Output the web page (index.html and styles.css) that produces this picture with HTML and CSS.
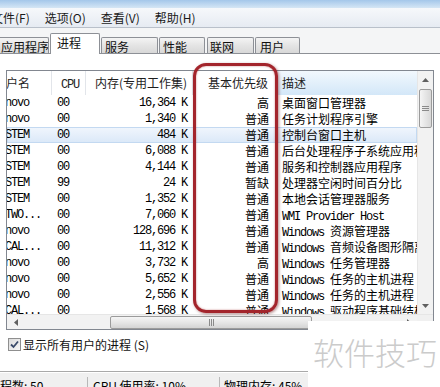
FILE: index.html
```html
<!DOCTYPE html>
<html>
<head>
<meta charset="utf-8">
<link rel="stylesheet" href="styles.css">
</head>
<body>
<div class="win">
  <div class="titlebar"></div>
  <div class="menubar">
    <span class="mi">文件(F)</span><span class="mi">选项(O)</span><span class="mi">查看(V)</span><span class="mi">帮助(H)</span>
  </div>
  <div class="tabstrip">
    <div class="tab t1">应用程序</div>
    <div class="tab t2 sel">进程</div>
    <div class="tab t3">服务</div>
    <div class="tab t4">性能</div>
    <div class="tab t5">联网</div>
    <div class="tab t6">用户</div>
  </div>
  <div class="panel">
    <div class="listbox">
      <div class="lv">
        <div class="lv-main">
          <div class="hdr">
            <div class="c1 h">用户名</div>
            <div class="c2 h"><span class="m">CPU</span></div>
            <div class="c3 h">内存(专用工作集)</div>
            <div class="c4 h">基本优先级</div>
            <div class="c5 h hover">描述</div>
          </div>
          <div class="rows">
            <div class="row"><div class="c1 m">Lenovo</div><div class="c2 m">00</div><div class="c3 m">16,364 K</div><div class="c4">高</div><div class="c5">桌面窗口管理器</div></div>
            <div class="row"><div class="c1 m">Lenovo</div><div class="c2 m">00</div><div class="c3 m">1,340 K</div><div class="c4">普通</div><div class="c5">任务计划程序引擎</div></div>
            <div class="row on"><div class="c1 m">SYSTEM</div><div class="c2 m">00</div><div class="c3 m">484 K</div><div class="c4">普通</div><div class="c5">控制台窗口主机</div></div>
            <div class="row"><div class="c1 m">SYSTEM</div><div class="c2 m">00</div><div class="c3 m">6,088 K</div><div class="c4">普通</div><div class="c5">后台处理程序子系统应用程序</div></div>
            <div class="row"><div class="c1 m">SYSTEM</div><div class="c2 m">00</div><div class="c3 m">4,144 K</div><div class="c4">普通</div><div class="c5">服务和控制器应用程序</div></div>
            <div class="row"><div class="c1 m">SYSTEM</div><div class="c2 m">99</div><div class="c3 m">24 K</div><div class="c4">暂缺</div><div class="c5">处理器空闲时间百分比</div></div>
            <div class="row"><div class="c1 m">SYSTEM</div><div class="c2 m">00</div><div class="c3 m">1,352 K</div><div class="c4">普通</div><div class="c5">本地会话管理器服务</div></div>
            <div class="row"><div class="c1 m">NETWO...</div><div class="c2 m">00</div><div class="c3 m">7,060 K</div><div class="c4">普通</div><div class="c5"><span class="m">WMI Provider Host</span></div></div>
            <div class="row"><div class="c1 m">Lenovo</div><div class="c2 m">00</div><div class="c3 m">128,696 K</div><div class="c4">普通</div><div class="c5"><span class="m">Windows </span>资源管理器</div></div>
            <div class="row"><div class="c1 m">LOCAL...</div><div class="c2 m">00</div><div class="c3 m">11,312 K</div><div class="c4">普通</div><div class="c5"><span class="m">Windows </span>音频设备图形隔离</div></div>
            <div class="row"><div class="c1 m">Lenovo</div><div class="c2 m">00</div><div class="c3 m">3,732 K</div><div class="c4">高</div><div class="c5"><span class="m">Windows </span>任务管理器</div></div>
            <div class="row"><div class="c1 m">Lenovo</div><div class="c2 m">00</div><div class="c3 m">5,652 K</div><div class="c4">普通</div><div class="c5"><span class="m">Windows </span>任务的主机进程</div></div>
            <div class="row"><div class="c1 m">Lenovo</div><div class="c2 m">00</div><div class="c3 m">2,556 K</div><div class="c4">普通</div><div class="c5"><span class="m">Windows </span>任务的主机进程</div></div>
            <div class="row"><div class="c1 m">LOCAL...</div><div class="c2 m">00</div><div class="c3 m">1,568 K</div><div class="c4">普通</div><div class="c5"><span class="m">Windows </span>驱动程序基础结构</div></div>
          </div>
        </div>
        <div class="vscroll">
          <div class="arrow"><svg width="7" height="4" viewBox="0 0 7 4"><path d="M0 4L3.5 0L7 4Z" fill="#606060"/></svg></div>
          <div class="vthumb"><svg width="7" height="5" viewBox="0 0 7 5"><path d="M0 0.5H7M0 2.5H7M0 4.5H7" stroke="#8a8a8a" stroke-width="1"/></svg></div>
          <div class="fill"></div>
          <div class="arrow"><svg width="7" height="4" viewBox="0 0 7 4"><path d="M0 0L3.5 4L7 0Z" fill="#606060"/></svg></div>
        </div>
      </div>
      <div class="hscroll">
        <div class="harrow"><svg width="4" height="7" viewBox="0 0 4 7"><path d="M4 0L0 3.5L4 7Z" fill="#606060"/></svg></div>
        <div class="hthumb"><svg width="5" height="7" viewBox="0 0 5 7"><path d="M0.5 0V7M2.5 0V7M4.5 0V7" stroke="#8a8a8a" stroke-width="1"/></svg></div>
        <div class="fill"></div>
        <div class="harrow"><svg width="4" height="7" viewBox="0 0 4 7"><path d="M0 0L4 3.5L0 7Z" fill="#606060"/></svg></div>
        <div class="corner"></div>
      </div>
    </div>
    <div class="chk">
      <span class="box"><svg width="9" height="9" viewBox="0 0 9 9"><path d="M1 4.5L3.5 7L8 1.5" fill="none" stroke="#3a4a6a" stroke-width="1.8"/></svg></span>
      <span class="lbl">显示所有用户的进程 (S)</span>
    </div>
  </div>
  <div class="status">
    <div class="s s1">进程数: 50</div>
    <div class="s s2">CPU 使用率: 10%</div>
    <div class="s s3">物理内存: 45%</div>
  </div>
  <div class="redbox"></div>
  <div class="wm">软件技巧</div>
</div>
</body>
</html>
```

FILE: styles.css
```css
* { box-sizing: border-box; margin: 0; padding: 0; }
html, body { width: 440px; height: 387px; overflow: hidden; background: #fff; }
body { font-family: "Noto Sans CJK SC", "Noto Sans", sans-serif; font-size: 12px; color: #000; }

.win { position: relative; width: 440px; height: 387px; overflow: hidden; display: flex; flex-direction: column; }

.titlebar { flex: none; height: 8px; background: linear-gradient(#a4c7ea, #d5e6f5); }

.menubar { flex: none; height: 20px; display: flex; align-items: center; gap: 15px; background: linear-gradient(#f6f8fb, #e6ebf2); border-bottom: 1px solid #b9c0ca; line-height: 18px; color: #1a1a1a; }
.mi { white-space: nowrap; }
.mi:first-child { margin-left: -9px; }

.tabstrip { flex: none; height: 26px; display: flex; align-items: flex-end; background: #f4f5f6; border-bottom: 1px solid #8d9096; }
.tab { height: 16px; line-height: 16px; padding-top: 1px; border: 1px solid #8d9096; border-bottom: none; border-radius: 2px 2px 0 0; background: linear-gradient(#f4f4f4, #e4e4e4 50%, #d8d8d8); white-space: nowrap; overflow: hidden; flex: none; color: #111; }
.tab.sel { height: 21px; margin-bottom: -1px; background: #fff; position: relative; z-index: 1; }
.t1 { margin-left: -3px; width: 52px; padding-left: 3px; }
.t2 { margin-left: 1px; width: 50px; padding-left: 6px; }
.t3 { margin-left: 1px; width: 57px; padding-left: 3px; }
.t4 { margin-left: 1px; width: 46px; padding-left: 3px; }
.t5 { margin-left: 2px; width: 47px; padding-left: 2px; }
.t6 { margin-left: 1px; width: 45px; padding-left: 4px; }

.panel { flex: none; height: 317px; background: #fff; padding: 16px 0 0 6px; }

.listbox { width: 428px; border: 1px solid #828790; background: #fff; }
.lv { display: flex; height: 243px; }
.lv-main { width: 410px; flex: none; overflow: hidden; }

.hdr { display: flex; height: 24px; line-height: 24px; }
.rows { height: 219px; overflow: hidden; }
.row { display: flex; height: 16px; line-height: 16px; }
.row.on { background: linear-gradient(#f1f6fd, #dae8f8); box-shadow: inset 0 0 0 1px #c3d9f1; }

.c1, .c2, .c3, .c4, .c5 { flex: none; white-space: nowrap; overflow: hidden; }
.c1 { width: 45px; text-indent: -14px; }
.c2 { width: 34px; padding-left: 5px; }
.c3 { width: 107px; text-align: right; padding-right: 6px; }
.c4 { width: 84px; text-align: right; padding-right: 8px; }
.c5 { width: 140px; padding-left: 5px; }

.h { border-right: 1px solid #e2e5ea; color: #1e1e1e; }
.hdr .c1 { text-indent: -13px; }
.hdr .c2 { padding-left: 9px; }
.hdr .c3 { padding-right: 5px; }
.hover { background: linear-gradient(#f2f8fd, #d3e7f8); border-right: none; }

.m { font-family: "Liberation Mono", "Noto Sans CJK SC", monospace; font-size: 12px; letter-spacing: -1.2px; }

.vscroll { width: 16px; flex: none; display: flex; flex-direction: column; background: #f2f2f2; border-left: 1px solid #e6e6e6; }
.arrow { height: 17px; flex: none; display: flex; align-items: center; justify-content: center; }
.vthumb { height: 39px; flex: none; margin: 1px 1px 0; border: 1px solid #9b9b9b; border-radius: 2px; background: linear-gradient(90deg, #f5f5f5, #e6e6e6 50%, #d8d8d8); display: flex; align-items: center; justify-content: center; }
.fill { flex: 1; }

.hscroll { display: flex; height: 15px; background: #f2f2f2; border-top: 1px solid #e6e6e6; }
.harrow { width: 17px; flex: none; display: flex; align-items: center; justify-content: center; }
.hthumb { width: 202px; flex: none; margin: 1px 0 0 86px; border: 1px solid #9b9b9b; border-radius: 2px; background: linear-gradient(#f5f5f5, #e6e6e6 50%, #d4d4d4); display: flex; align-items: center; justify-content: center; }
.corner { width: 16px; flex: none; background: #f0f0f0; }

.chk { display: flex; align-items: center; gap: 2px; height: 15px; margin: 7px 0 0 2px; }
.box { width: 13px; height: 13px; border: 1px solid #8f8f8f; background: linear-gradient(135deg, #dcdcdc, #f6f6f6); display: flex; align-items: center; justify-content: center; }
.lbl { line-height: 15px; color: #111; }

.status { flex: 1; display: flex; background: #f0f0f0; border-top: 1px solid #a9a9a9; box-shadow: inset 0 1px #fff; padding-top: 5px; line-height: 17px; }
.s { flex: none; white-space: nowrap; }
.s1 { margin-left: -12px; width: 100px; border-right: 1px solid #b8b8b8; }
.s2 { width: 132px; padding-left: 5px; border-right: 1px solid #b8b8b8; }
.s3 { padding-left: 4px; }

.redbox { position: absolute; left: 193px; top: 63px; width: 85px; height: 250px; border: 3px solid #a3252c; border-radius: 13px; box-shadow: 1px 1px 3px rgba(90, 0, 0, 0.45), inset 0 0 2px rgba(150, 0, 0, 0.5); z-index: 2; }

.wm { position: absolute; left: 308px; top: 321px; width: 132px; height: 66px; background: #fff; color: #cbcbcb; font-size: 31px; font-weight: 300; line-height: 62px; padding-left: 5px; white-space: nowrap; z-index: 3; }
```
